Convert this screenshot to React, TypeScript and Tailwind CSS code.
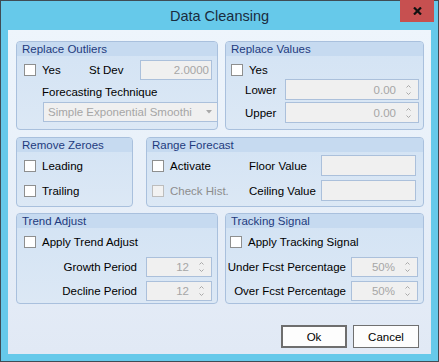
import type { ReactNode } from 'react';

// Data Cleansing dialog (WinForms style, Windows 8 frame)

const Check = ({ disabled }: { disabled?: boolean }) => (
  <span
    className={`block w-[12px] h-[12px] shrink-0 border ${
      disabled ? 'border-[#BDBDBD] bg-[#F2F2F2]' : 'border-[#8E8F8F] bg-white'
    }`}
  />
);

const Spinner = () => (
  <svg width="9" height="14" viewBox="0 0 9 14" className="ml-[8px] mr-[5px] shrink-0">
    <path d="M2.5 4.5 L4.5 2.5 L6.5 4.5" fill="none" stroke="#A9A9A9" strokeWidth="1" />
    <path d="M2.5 9.5 L4.5 11.5 L6.5 9.5" fill="none" stroke="#A9A9A9" strokeWidth="1" />
  </svg>
);

const Field = ({ value, spin, className = '' }: { value?: string; spin?: boolean; className?: string }) => (
  <div
    className={`flex h-full items-center justify-end border border-[#ABC0DB] bg-[#F0F0F0] text-[#A6A6A6] ${
      spin ? '' : 'pr-[2px]'
    } ${className}`}
  >
    {value && <span>{value}</span>}
    {spin && <Spinner />}
  </div>
);

const GroupBox = ({ title, className = '', children }: { title: string; className?: string; children: ReactNode }) => (
  <div
    className={`flex flex-col overflow-hidden rounded-[4px] border border-[#A9C0DD] bg-gradient-to-b from-[#D3E3F4] to-[#DCE8F5] ${className}`}
  >
    <div className="h-[14px] shrink-0 bg-[#C6DAF0] pl-[5px] text-[11.5px] leading-[14px] text-[#1E3A7E]">{title}</div>
    <div className="flex flex-1 flex-col">{children}</div>
  </div>
);

export default function App() {
  return (
    <div className="flex h-[362px] w-[439px] flex-col whitespace-nowrap border border-[#3F4C55] bg-[#66C9EA] font-['Liberation_Sans',Arial,sans-serif] text-[11.5px] leading-[14px] text-black">
      {/* title bar */}
      <div className="relative flex h-[29px] shrink-0 items-center justify-center">
        <span className="text-[14.5px] text-[#1A2C3E]">Data Cleansing</span>
        <div className="absolute right-[4px] top-[-1px] flex h-[22px] w-[34px] items-center justify-center bg-[#C75050]">
          <svg width="9" height="8" viewBox="0 0 9 8">
            <path d="M1 0.5 L8 7.5 M8 0.5 L1 7.5" stroke="#111" strokeWidth="2.2" />
          </svg>
        </div>
      </div>

      {/* client area */}
      <div className="mx-[7px] mb-[7px] flex flex-1 flex-col bg-gradient-to-b from-[#EEF5FC] to-[#E1E9F5] pl-[8px] pt-[11px]">
        {/* row 1 */}
        <div className="flex h-[89px] gap-[7px]">
          <GroupBox title="Replace Outliers" className="w-[202px]">
            <div className="mt-[4px] flex h-[20px] items-center pl-[7px]">
              <Check />
              <span className="ml-[6px] w-[47px]">Yes</span>
              <span>St Dev</span>
              <Field value="2.0000" className="ml-auto mr-[5px] w-[72px]" />
            </div>
            <div className="mt-[4px] flex h-[16px] items-center pl-[25px]">Forecasting Technique</div>
            <div className="mt-[2px] flex h-[20px] pl-[26px] pr-[5px]">
              <div className="flex flex-1 items-center border border-[#ABC0DB] bg-[#F0F0F0] pl-[4px] pr-[7px] text-[#A6A6A6]">
                <span className="mr-[14px] flex-1 overflow-hidden">Simple Exponential Smoothi</span>
                <svg width="6" height="4" viewBox="0 0 6 4" className="shrink-0">
                  <path d="M0 0 H6 L3 3.5 Z" fill="#A8A8A8" />
                </svg>
              </div>
            </div>
          </GroupBox>

          <GroupBox title="Replace Values" className="w-[199px]">
            <div className="mt-[6px] flex h-[16px] items-center pl-[5px]">
              <Check />
              <span className="ml-[6px]">Yes</span>
            </div>
            <div className="mt-[1px] flex h-[21px] items-center pl-[19px] pr-[4px]">
              <span className="w-[40px]">Lower</span>
              <Field value="0.00" spin className="flex-1" />
            </div>
            <div className="mt-[2px] flex h-[21px] items-center pl-[19px] pr-[4px]">
              <span className="w-[40px]">Upper</span>
              <Field value="0.00" spin className="flex-1" />
            </div>
          </GroupBox>
        </div>

        {/* row 2 */}
        <div className="mt-[7px] flex h-[70px] gap-[13px]">
          <GroupBox title="Remove Zeroes" className="w-[117px]">
            <div className="mt-[6px] flex h-[16px] items-center pl-[7px]">
              <Check />
              <span className="ml-[6px]">Leading</span>
            </div>
            <div className="mt-[9px] flex h-[16px] items-center pl-[7px]">
              <Check />
              <span className="ml-[6px]">Trailing</span>
            </div>
          </GroupBox>

          <GroupBox title="Range Forecast" className="w-[278px]">
            <div className="mt-[3px] flex h-[21px] items-center pl-[5px] pr-[7px]">
              <Check />
              <span className="ml-[6px] w-[79px]">Activate</span>
              <span>Floor Value</span>
              <Field className="ml-auto w-[95px]" />
            </div>
            <div className="mt-[4px] flex h-[21px] items-center pl-[5px] pr-[7px]">
              <Check disabled />
              <span className="ml-[6px] w-[79px] text-[#8D8D8D]">Check Hist.</span>
              <span>Ceiling Value</span>
              <Field className="ml-auto w-[95px]" />
            </div>
          </GroupBox>
        </div>

        {/* row 3 */}
        <div className="mt-[6px] flex h-[91px] gap-[7px]">
          <GroupBox title="Trend Adjust" className="w-[202px]">
            <div className="mt-[6px] flex h-[16px] items-center pl-[7px]">
              <Check />
              <span className="ml-[6px]">Apply Trend Adjust</span>
            </div>
            <div className="mt-[7px] flex h-[20px] items-center">
              <span className="w-[120px] text-right">Growth Period</span>
              <Field value="12" spin className="ml-[9px] w-[66px]" />
            </div>
            <div className="mt-[4px] flex h-[20px] items-center">
              <span className="w-[120px] text-right">Decline Period</span>
              <Field value="12" spin className="ml-[9px] w-[66px]" />
            </div>
          </GroupBox>

          <GroupBox title="Tracking Signal" className="w-[199px]">
            <div className="mt-[6px] flex h-[16px] items-center pl-[4px]">
              <Check />
              <span className="ml-[6px]">Apply Tracking Signal</span>
            </div>
            <div className="mt-[7px] flex h-[20px] items-center">
              <span className="w-[120px] text-right">Under Fcst Percentage</span>
              <Field value="50%" spin className="ml-[5px] w-[67px]" />
            </div>
            <div className="mt-[4px] flex h-[20px] items-center">
              <span className="w-[120px] text-right">Over Fcst Percentage</span>
              <Field value="50%" spin className="ml-[5px] w-[67px]" />
            </div>
          </GroupBox>
        </div>

        {/* buttons */}
        <div className="mt-[21px] flex justify-end gap-[6px] pr-[12px]">
          <button className="h-[23px] w-[66px] border-2 border-[#6E6E6E] bg-[#FDFDFD] text-[11.5px]">Ok</button>
          <button className="h-[23px] w-[66px] border border-[#707070] bg-[#FDFDFD] text-[11.5px]">Cancel</button>
        </div>
      </div>
    </div>
  );
}
